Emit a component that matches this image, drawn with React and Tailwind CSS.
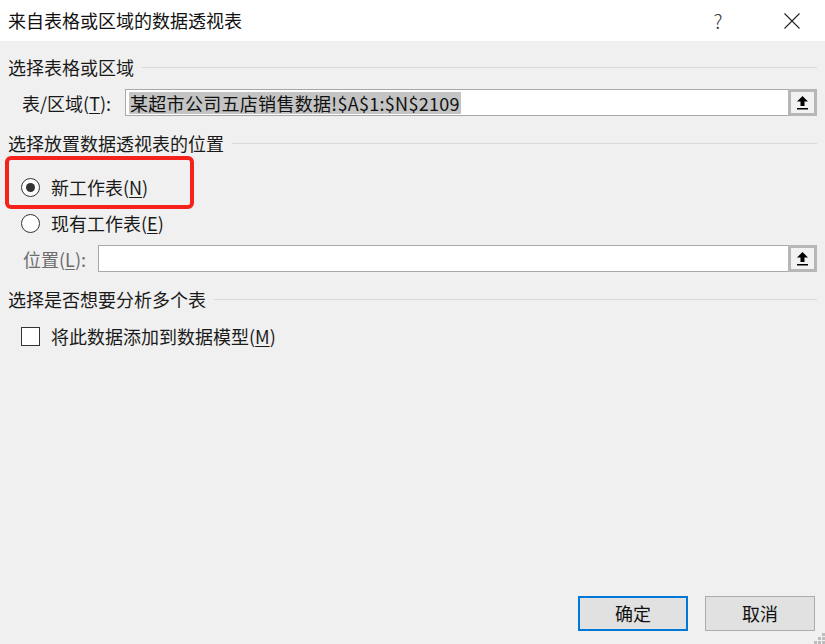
import React from 'react'

const font = { fontFamily: '"Noto Sans CJK SC", "Microsoft YaHei", sans-serif' }

const U = ({ children }) => <span className="underline underline-offset-2">{children}</span>

const SectionHeader = ({ title, className = '' }) => (
  <div className={`flex items-center h-6 pr-2 ${className}`}>
    <span className="text-[18px] leading-6 text-[#1a1a1a] whitespace-nowrap">{title}</span>
    <div className="flex-1 h-px bg-[#dadada] ml-[8px]" />
  </div>
)

const PickButton = () => (
  <div className="w-[29px] h-[27px] border-[3px] border-[#b7b7b7] bg-[#f2f2f2] flex items-center justify-center">
    <svg width="13" height="15" viewBox="0 0 13 15">
      <path d="M6.5 1 L12 6.5 L8.5 6.5 L8.5 11 L4.5 11 L4.5 6.5 L1 6.5 Z" fill="#000" />
      <rect x="1" y="13" width="11" height="1.5" fill="#000" />
    </svg>
  </div>
)

const RangeInput = ({ children, className = '' }) => (
  <div className={`flex items-stretch h-[27px] ${className}`}>
    <div className="flex-1 bg-white border border-[#a9a9a9] border-r-0 flex items-center px-[3px] overflow-hidden">
      {children}
    </div>
    <PickButton />
  </div>
)

export default function App() {
  return (
    <div className="w-[825px] h-[644px] flex flex-col bg-[#f0f0f0] overflow-hidden" style={font}>
      <div className="h-[41px] bg-white flex items-center pl-2 shrink-0">
        <span className="text-[18px] text-[#111]">来自表格或区域的数据透视表</span>
        <div className="flex-1" />
        <span className="text-[20px] font-light text-[#333] w-[20px] text-center">?</span>
        <svg className="ml-[56px] mr-[25px]" width="16" height="16" viewBox="0 0 16 16">
          <path d="M0.5 0.5 L15.5 15.5 M15.5 0.5 L0.5 15.5" stroke="#222" strokeWidth="1.1" />
        </svg>
      </div>

      <div className="relative flex-1 flex flex-col pl-2 pt-[14px]">
        <SectionHeader title="选择表格或区域" />

        <div className="flex items-center mt-[10px] pr-2">
          <span className="text-[18px] leading-6 text-[#1a1a1a] ml-[14px] w-[103px] whitespace-nowrap">
            表/区域(<U>T</U>):
          </span>
          <RangeInput className="flex-1">
            <span className="bg-[#c4c4c4] text-[18px] leading-[22px] tracking-[0.3px] text-[#111] whitespace-nowrap px-[1px]">
              某超市公司五店销售数据!$A$1:$N$2109
            </span>
          </RangeInput>
        </div>

        <SectionHeader title="选择放置数据透视表的位置" className="mt-[15px]" />

        <label className="flex items-center mt-[20px] h-6 ml-[13px]">
          <span className="w-[19px] h-[19px] rounded-full border border-[#333] bg-white flex items-center justify-center">
            <span className="w-[9px] h-[9px] rounded-full bg-[#333]" />
          </span>
          <span className="ml-[11px] text-[18px] leading-6 text-[#1a1a1a]">新工作表(<U>N</U>)</span>
        </label>

        <label className="flex items-center mt-[12px] h-6 ml-[13px]">
          <span className="w-[19px] h-[19px] rounded-full border border-[#333] bg-white" />
          <span className="ml-[11px] text-[18px] leading-6 text-[#1a1a1a]">现有工作表(<U>E</U>)</span>
        </label>

        <div className="flex items-center mt-[10px] pr-2">
          <span className="text-[18px] leading-6 text-[#6d6d6d] ml-[15px] w-[75px] whitespace-nowrap">
            位置(<U>L</U>):
          </span>
          <RangeInput className="flex-1" />
        </div>

        <SectionHeader title="选择是否想要分析多个表" className="mt-[15px]" />

        <label className="flex items-center mt-[13px] h-6 ml-[13px]">
          <span className="w-[19px] h-[19px] border border-[#333] bg-white" />
          <span className="ml-[11px] text-[18px] leading-6 text-[#1a1a1a]">将此数据添加到数据模型(<U>M</U>)</span>
        </label>

        <div className="flex-1" />

        <div className="flex justify-end gap-[17px] pr-[10px] mb-[13px]">
          <button className="w-[110px] h-[35px] bg-[#e1e1e1] border-2 border-[#0078d7] text-[18px] text-[#111]">
            确定
          </button>
          <button className="w-[110px] h-[35px] bg-[#e1e1e1] border border-[#adadad] text-[18px] text-[#111]">
            取消
          </button>
        </div>

        <div className="absolute left-[5px] top-[115px] w-[189px] h-[53px] border-4 border-[#f5221b] rounded-[6px] pointer-events-none" />

        <svg className="absolute right-0 bottom-0" width="12" height="12" viewBox="0 0 12 12">
          <rect x="9" y="1" width="3" height="3" fill="#bdbdbd" />
          <rect x="5" y="5" width="3" height="3" fill="#bdbdbd" />
          <rect x="9" y="5" width="3" height="3" fill="#bdbdbd" />
          <rect x="1" y="9" width="3" height="3" fill="#bdbdbd" />
          <rect x="5" y="9" width="3" height="3" fill="#bdbdbd" />
          <rect x="9" y="9" width="3" height="3" fill="#bdbdbd" />
        </svg>
      </div>
    </div>
  )
}
